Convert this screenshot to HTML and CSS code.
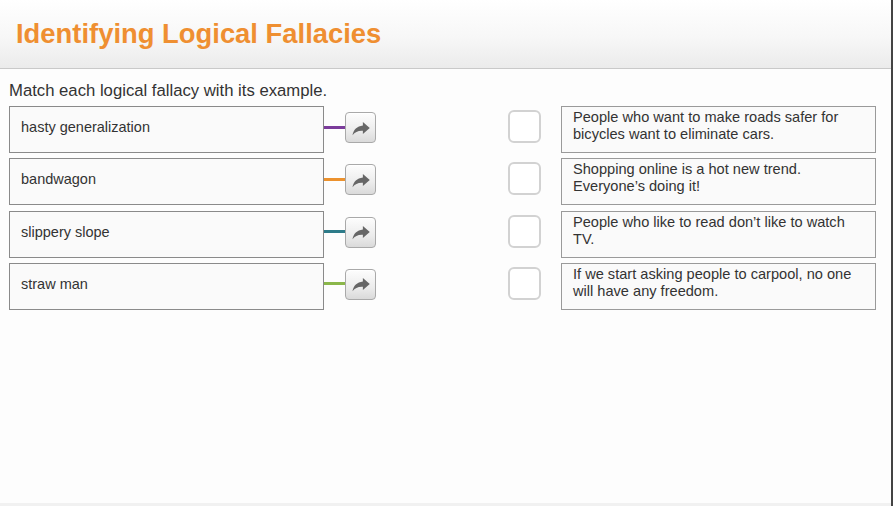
FILE: index.html
```html
<!DOCTYPE html>
<html>
<head>
<meta charset="utf-8">
<link rel="stylesheet" href="styles.css">
</head>
<body>
<div class="page">
  <header class="header"><h1 class="title">Identifying Logical Fallacies</h1></header>
  <main class="content">
    <p class="prompt">Match each logical fallacy with its example.</p>
    <div class="rows">
      <div class="row">
        <div class="term">hasty generalization</div>
        <span class="link purple"></span>
        <button class="arrow"><svg viewBox="0 0 16 16" width="20" height="20"><path d="M9.5 3.2 L15 8 L9.5 12.8 V10.2 C5.6 10 3.2 11.2 1.2 13.8 C2 9.2 4.8 6.6 9.5 6 Z"/></svg></button>
        <span class="check"></span>
        <div class="example">People who want to make roads safer for bicycles want to eliminate cars.</div>
      </div>
      <div class="row">
        <div class="term">bandwagon</div>
        <span class="link orange"></span>
        <button class="arrow"><svg viewBox="0 0 16 16" width="20" height="20"><path d="M9.5 3.2 L15 8 L9.5 12.8 V10.2 C5.6 10 3.2 11.2 1.2 13.8 C2 9.2 4.8 6.6 9.5 6 Z"/></svg></button>
        <span class="check"></span>
        <div class="example">Shopping online is a hot new trend. Everyone’s doing it!</div>
      </div>
      <div class="row">
        <div class="term">slippery slope</div>
        <span class="link teal"></span>
        <button class="arrow"><svg viewBox="0 0 16 16" width="20" height="20"><path d="M9.5 3.2 L15 8 L9.5 12.8 V10.2 C5.6 10 3.2 11.2 1.2 13.8 C2 9.2 4.8 6.6 9.5 6 Z"/></svg></button>
        <span class="check"></span>
        <div class="example">People who like to read don’t like to watch TV.</div>
      </div>
      <div class="row">
        <div class="term">straw man</div>
        <span class="link green"></span>
        <button class="arrow"><svg viewBox="0 0 16 16" width="20" height="20"><path d="M9.5 3.2 L15 8 L9.5 12.8 V10.2 C5.6 10 3.2 11.2 1.2 13.8 C2 9.2 4.8 6.6 9.5 6 Z"/></svg></button>
        <span class="check"></span>
        <div class="example">If we start asking people to carpool, no one will have any freedom.</div>
      </div>
    </div>
  </main>
  <footer class="footer"></footer>
</div>
</body>
</html>
```
FILE: styles.css
```css
html, body {
  margin: 0;
  padding: 0;
  height: 100%;
}
body {
  font-family: "Liberation Sans", Arial, sans-serif;
  color: #333;
  background: #fdfdfd;
}
.page {
  height: 506px;
  display: flex;
  flex-direction: column;
  border-right: 2px solid #444;
  box-sizing: border-box;
}
.header {
  height: 69px;
  background: linear-gradient(to bottom, #ffffff 0%, #f7f7f7 55%, #ebebeb 100%);
  border-bottom: 1px solid #c9c9c9;
  display: flex;
  align-items: center;
  padding-left: 16px;
  box-sizing: border-box;
}
.title {
  margin: 0;
  font-size: 27.4px;
  font-weight: bold;
  color: #ef8f31;
  padding-bottom: 1px;
}
.content {
  flex: 1;
  padding: 12px 0 0 9px;
}
.prompt {
  margin: 0;
  font-size: 16.7px;
  line-height: 20px;
  color: #333;
}
.rows {
  margin-top: 5px;
  display: flex;
  flex-direction: column;
  gap: 5.33px;
}
.row {
  display: flex;
  align-items: flex-start;
  height: 47px;
}
.term, .example {
  box-sizing: border-box;
  width: 315px;
  height: 47px;
  background: #fafafa;
  border: 1px solid #8a8a8a;
}
.term {
  font-size: 14.5px;
  padding: 11px 0 0 11px;
  line-height: 18px;
}
.example {
  border-color: #9a9a9a;
  font-size: 14.6px;
  line-height: 17px;
  padding: 2px 8px 0 11px;
}
.link {
  width: 21px;
  height: 3px;
  margin-top: 19.5px;
}
.purple { background: #7b3c9b; }
.orange { background: #ec922e; }
.teal { background: #2d7b89; }
.green { background: #8bb74a; }
.arrow {
  box-sizing: border-box;
  width: 31px;
  height: 31px;
  margin-top: 6px;
  padding: 0;
  border: 1px solid #a9a9a9;
  border-radius: 4px;
  background: linear-gradient(to bottom, #fdfdfd 0%, #ececec 60%, #dadada 100%);
  box-shadow: inset 0 1px 0 #fff;
  display: flex;
  align-items: center;
  justify-content: center;
}
.arrow svg {
  fill: #666;
}
.check {
  box-sizing: border-box;
  width: 33px;
  height: 33px;
  margin: 4px 20px 0 132px;
  border: 2px solid #d2d2d2;
  border-radius: 6px;
  background: #fff;
}
.footer {
  height: 3px;
  background: #f1f1f1;
}
```
